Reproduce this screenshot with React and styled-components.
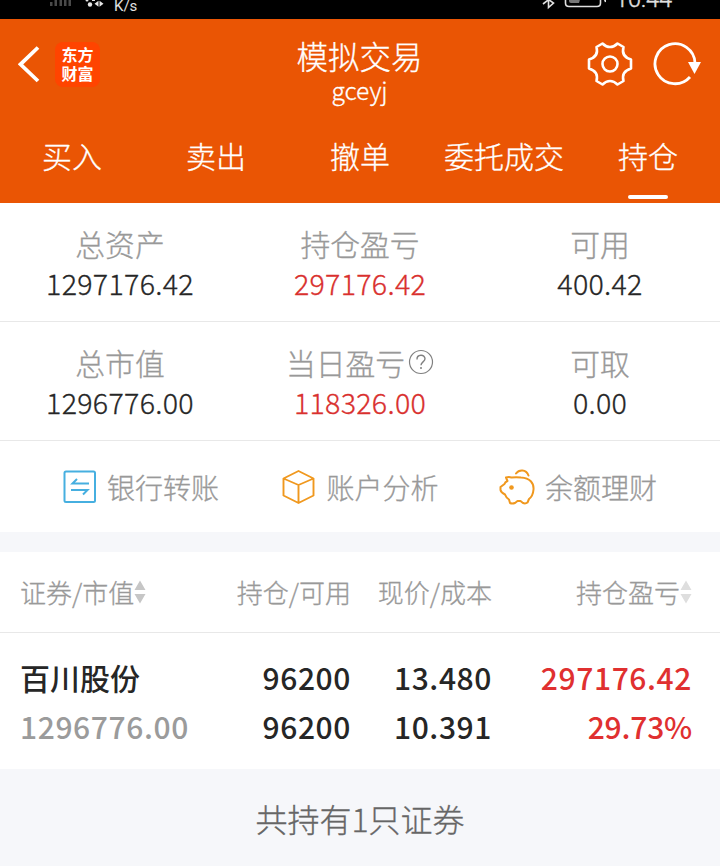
import React from "react";
import styled, { createGlobalStyle } from "styled-components";

const tabs = ["买入", "卖出", "撤单", "委托成交", "持仓"];

const summary = [
  [
    { label: "总资产", value: "1297176.42" },
    { label: "持仓盈亏", value: "297176.42", up: true },
    { label: "可用", value: "400.42" },
  ],
  [
    { label: "总市值", value: "1296776.00" },
    { label: "当日盈亏", value: "118326.00", up: true, help: true },
    { label: "可取", value: "0.00" },
  ],
];

export default function App() {
  return (
    <Wrapper>
      <GlobalStyle />
      <StatusBar>
        <StatusLeft>
          <SignalIcon />
          <Speed>K/s</Speed>
        </StatusLeft>
        <StatusRight>
          <BatteryIcon />
          <Time>10:44</Time>
        </StatusRight>
      </StatusBar>
      <Header>
        <TitleBar>
          <Side>
            <BackIcon />
            <Logo>
              <span>东方</span>
              <span>财富</span>
            </Logo>
          </Side>
          <TitleBox>
            <Title>模拟交易</Title>
            <UserName>gceyj</UserName>
          </TitleBox>
          <Side $right>
            <GearIcon />
            <RefreshIcon />
          </Side>
        </TitleBar>
        <Tabs>
          {tabs.map((tab) => (
            <Tab key={tab} $active={tab === "持仓"}>{tab}</Tab>
          ))}
        </Tabs>
      </Header>
      {summary.map((row, i) => (
        <SummaryRow key={i}>
          {row.map((item) => (
            <SummaryItem key={item.label}>
              <Label>
                {item.label}
                {item.help && <HelpIcon />}
              </Label>
              <Value $up={item.up}>{item.value}</Value>
            </SummaryItem>
          ))}
        </SummaryRow>
      ))}
      <Actions>
        <Action><TransferIcon />银行转账</Action>
        <Action><BoxIcon />账户分析</Action>
        <Action><PigIcon />余额理财</Action>
      </Actions>
      <TableHead>
        <HeadCell $left>证券/市值<SortIcon /></HeadCell>
        <HeadCell>持仓/可用</HeadCell>
        <HeadCell>现价/成本</HeadCell>
        <HeadCell>持仓盈亏<SortIcon light /></HeadCell>
      </TableHead>
      <StockRow>
        <StockName>百川股份</StockName>
        <Num>96200</Num>
        <Num>13.480</Num>
        <Num $color="#e03030">297176.42</Num>
        <Num $left $color="#9b9b9b">1296776.00</Num>
        <Num>96200</Num>
        <Num>10.391</Num>
        <Num $color="#e03030" $tight>29.73%</Num>
      </StockRow>
      <Footer>共持有1只证券</Footer>
    </Wrapper>
  );
}

const SignalIcon = () => (
  <svg width="56" height="19" viewBox="0 0 56 19">
    <g fill="#4a4a4a">
      <rect x="1" y="2" width="2.500" height="4" />
      <rect x="5.500" y="0" width="2.500" height="6" />
      <rect x="10.500" y="0" width="2.500" height="6" />
      <rect x="15" y="0" width="2.500" height="6" />
      <rect x="19.500" y="0" width="2.500" height="6" />
    </g>
    <g fill="#e6e6e6">
      <circle cx="38" cy="0" r="1.500" />
      <circle cx="41" cy="4.500" r="2.200" />
      <path d="M45.500 3.800l4-3v6zM54.500 3.800l-4-3v6zM43 0h3v1h-3z" />
    </g>
  </svg>
);

const BatteryIcon = () => (
  <svg width="64" height="19" viewBox="0 0 64 19" fill="none" stroke="#e0e0e0">
    <path d="M1 4l9-7M6.500 -8v15.500l5-4.500L3-3" strokeWidth="1.600" />
    <path d="M23.500-8V3q0 3.500 3.500 3.500h28q3.500 0 3.500-3.500V-8" strokeWidth="1.600" />
    <path d="M27-4h12L37 3h-8q-2 0-2-2z" fill="#777" stroke="none" />
    <path d="M62 0h3l-2 2.500z" fill="#e0e0e0" stroke="none" />
  </svg>
);

const BackIcon = () => (
  <svg width="22" height="38" viewBox="0 0 22 38" fill="none" stroke="#fff" strokeWidth="3.800">
    <path d="M20 2.500L2.500 19.300 20 36" />
  </svg>
);

const GearIcon = () => (
  <svg width="46" height="46" viewBox="0 0 46 46" fill="none" stroke="#fff" strokeWidth="2.600" strokeLinejoin="round">
    <path d="M15.500 2.500C18 5 20 6 23 6S28 5 30.500 2.500L36.500 6Q34 15.500 44 18.500V27.500Q34 30.500 36.500 40L30.500 43.500C28 41 26 40 23 40S18 41 15.500 43.500L9.500 40Q12 30.500 2 27.500V18.500Q12 15.500 9.500 6Z" />
    <circle cx="23" cy="23" r="7.500" />
  </svg>
);

const RefreshIcon = () => (
  <svg width="48" height="46" viewBox="0 0 48 46" fill="none" stroke="#fff" strokeWidth="2.800">
    <path d="M37 36A20 20 0 1 1 42 22" />
    <path d="M35 21h13l-6.500 12z" fill="#fff" stroke="none" />
  </svg>
);

const HelpIcon = () => (
  <HelpSvg width="26" height="26" viewBox="0 0 26 26" fill="none" stroke="#808080">
    <circle cx="13" cy="13" r="11.500" strokeWidth="1.200" />
    <path d="M9 10.500c-.2-5.500 8-5.500 8-.8 0 3.100-4 3.300-4 6.500" strokeWidth="1.400" />
    <circle cx="13" cy="19" r="1" fill="#808080" stroke="none" />
  </HelpSvg>
);

const TransferIcon = () => (
  <svg width="34" height="34" viewBox="0 0 34 34" fill="none" stroke="#46afe0" strokeWidth="2">
    <rect x="1.500" y="1.500" width="30.500" height="30.500" rx="1.500" />
    <path d="M26 13.500H9.500l4.500-4.500M8 20h16.500l-4.500 4.500" />
  </svg>
);

const BoxIcon = () => (
  <svg width="34" height="34" viewBox="0 0 34 34" fill="none" stroke="#f0981e" strokeWidth="1.900" strokeLinejoin="round">
    <path d="M16.500 1l15 7.500v17l-15 7.500-15-7.500v-17zM1.500 8.500l15 6.500 15-6.500M16.500 15v18" />
  </svg>
);

const PigIcon = () => (
  <svg width="36" height="36" viewBox="0 0 36 36" fill="none" stroke="#f0981e" strokeWidth="2" strokeLinejoin="round" strokeLinecap="round">
    <path d="M7 8.500Q10 7.500 12.500 8.500Q17 8 22 8.500C31 9 35 14 34.500 20.500Q34 27 30 30L28.500 33.500Q26.500 35 24 34L21.500 32H18.500L16 34Q13 35 11 34L10 30.500Q7 28.500 6 25.500Q2 23.500 1.500 21V18L5.500 15Q6 13 8.500 12Z" />
    <path d="M17 4.500C20 .5 27 0 29.500 6.500" />
    <circle cx="12.500" cy="18.500" r="2.300" fill="#f0981e" stroke="none" />
  </svg>
);

const SortIcon = ({ light }) => (
  <svg width="12" height="24" viewBox="0 0 12 24" fill={light ? "#dedede" : "#c6c6c6"}>
    <path d="M6 0.500l5.500 9.500H.5zM6 23.500l5.500-9.500H.5z" />
  </svg>
);

const GlobalStyle = createGlobalStyle`
  * {
    box-sizing: border-box;
  }
  body {
    margin: 0;
    background: #f6f7fa;
  }
  svg {
    display: block;
    flex: none;
  }
`;

const Wrapper = styled.div`
  width: 720px;
  height: 866px;
  overflow: hidden;
  display: flex;
  flex-direction: column;
  font-family: "Noto Sans CJK SC", sans-serif;
  font-weight: 300;
  white-space: nowrap;
  -webkit-text-stroke: 0.3px currentColor;
`;

const StatusBar = styled.div`
  height: 19px;
  flex: none;
  padding: 0 49px;
  display: flex;
  justify-content: space-between;
  overflow: hidden;
  background: #000;
  color: #e0e0e0;
  -webkit-text-stroke: 0;
`;

const StatusLeft = styled.div`
  display: flex;
  gap: 9px;
`;

const StatusRight = styled.div`
  display: flex;
  gap: 9px;
`;

const Speed = styled.span`
  font: 15px/12px "Roboto", sans-serif;
`;

const Time = styled.span`
  width: 56px;
  margin-top: -13px;
  font: 300 23.500px/24px "Roboto", sans-serif;
  -webkit-text-stroke: 0.4px currentColor;
`;

const Header = styled.header`
  height: 184px;
  flex: none;
  background: #ea5504;
  color: #fff;
`;

const TitleBar = styled.div`
  height: 92px;
  padding: 0 19px 0 18px;
  display: grid;
  grid-template-columns: 1fr auto 1fr;
`;

const Side = styled.div`
  height: 90px;
  display: flex;
  align-items: center;
  justify-content: ${({ $right }) => ($right ? "flex-end" : "flex-start")};
  gap: ${({ $right }) => ($right ? "20px" : "15px")};
`;

const Logo = styled.div`
  width: 45px;
  height: 45px;
  border-radius: 8px;
  display: flex;
  flex-direction: column;
  align-items: center;
  justify-content: center;
  background: #ff4400;
  font-size: 16px;
  font-weight: 700;
  line-height: 19px;
  -webkit-text-stroke: 0;
`;

const TitleBox = styled.div`
  display: flex;
  flex-direction: column;
  align-items: center;
  padding-top: 16px;
`;

const Title = styled.div`
  font-size: 31.500px;
  line-height: 40px;
`;

const UserName = styled.div`
  font-size: 24.500px;
  line-height: 30px;
`;

const Tabs = styled.nav`
  height: 92px;
  display: grid;
  grid-template-columns: repeat(5, 1fr);
`;

const Tab = styled.div`
  height: 92px;
  padding-top: 24px;
  display: flex;
  flex-direction: column;
  align-items: center;
  justify-content: space-between;
  font-size: 30px;
  line-height: 40px;

  &::after {
    content: "";
    width: 40px;
    height: 4px;
    margin-bottom: 4px;
    border-radius: 2px;
    background: ${({ $active }) => ($active ? "#fff" : "transparent")};
  }
`;

const SummaryRow = styled.section`
  height: 119px;
  flex: none;
  display: grid;
  grid-template-columns: repeat(3, 240px);
  background: #fff;
  border-bottom: 1px solid #e8e8e8;
`;

const SummaryItem = styled.div`
  padding-top: 20px;
  display: flex;
  flex-direction: column;
  align-items: center;
`;

const Label = styled.div`
  display: flex;
  align-items: center;
  font-size: 29.800px;
  line-height: 40px;
  color: #999;
`;

const HelpSvg = styled.svg`
  margin: -1px 0 0 3px;
`;

const Value = styled.div`
  font-size: 28.600px;
  line-height: 40px;
  letter-spacing: 0.3px;
  color: ${({ $up }) => ($up ? "#d9302e" : "#262626")};
`;

const Actions = styled.section`
  height: 91px;
  flex: none;
  padding: 0 63px;
  display: flex;
  align-items: center;
  justify-content: space-between;
  background: #fff;
`;

const Action = styled.div`
  display: flex;
  align-items: center;
  gap: 10px;
  font-size: 28px;
  line-height: 40px;
  color: #999;

  &:nth-child(2) {
    margin-left: 3px;
  }
`;

const TableHead = styled.div`
  height: 81px;
  flex: none;
  margin-top: 20px;
  padding: 0 28px 0 20px;
  display: grid;
  grid-template-columns: 160px 171px 141px 200px;
  align-items: center;
  background: #fff;
  border-bottom: 1px solid #e8e8e8;
`;

const HeadCell = styled.div`
  display: flex;
  align-items: center;
  justify-content: ${({ $left }) => ($left ? "flex-start" : "flex-end")};
  font-size: 26px;
  line-height: 40px;
  color: #999;
`;

const StockRow = styled.div`
  height: 136px;
  flex: none;
  padding: 20px 28px 0 20px;
  display: grid;
  grid-template-columns: 160px 171px 141px 200px;
  grid-auto-rows: 49px;
  background: #fff;
  -webkit-text-stroke: 0;
`;

const StockName = styled.div`
  font-size: 30px;
  line-height: 49px;
  font-weight: 500;
  color: #262626;
`;

const Num = styled.div`
  font-size: 30px;
  line-height: 49px;
  font-weight: 500;
  letter-spacing: ${({ $tight }) => ($tight ? "-0.2px" : "0.6px")};
  text-align: ${({ $left }) => ($left ? "left" : "right")};
  color: ${({ $color }) => $color || "#262626"};
`;

const Footer = styled.footer`
  flex: 1;
  display: flex;
  align-items: center;
  justify-content: center;
  font-size: 32px;
  color: #666;
`;
